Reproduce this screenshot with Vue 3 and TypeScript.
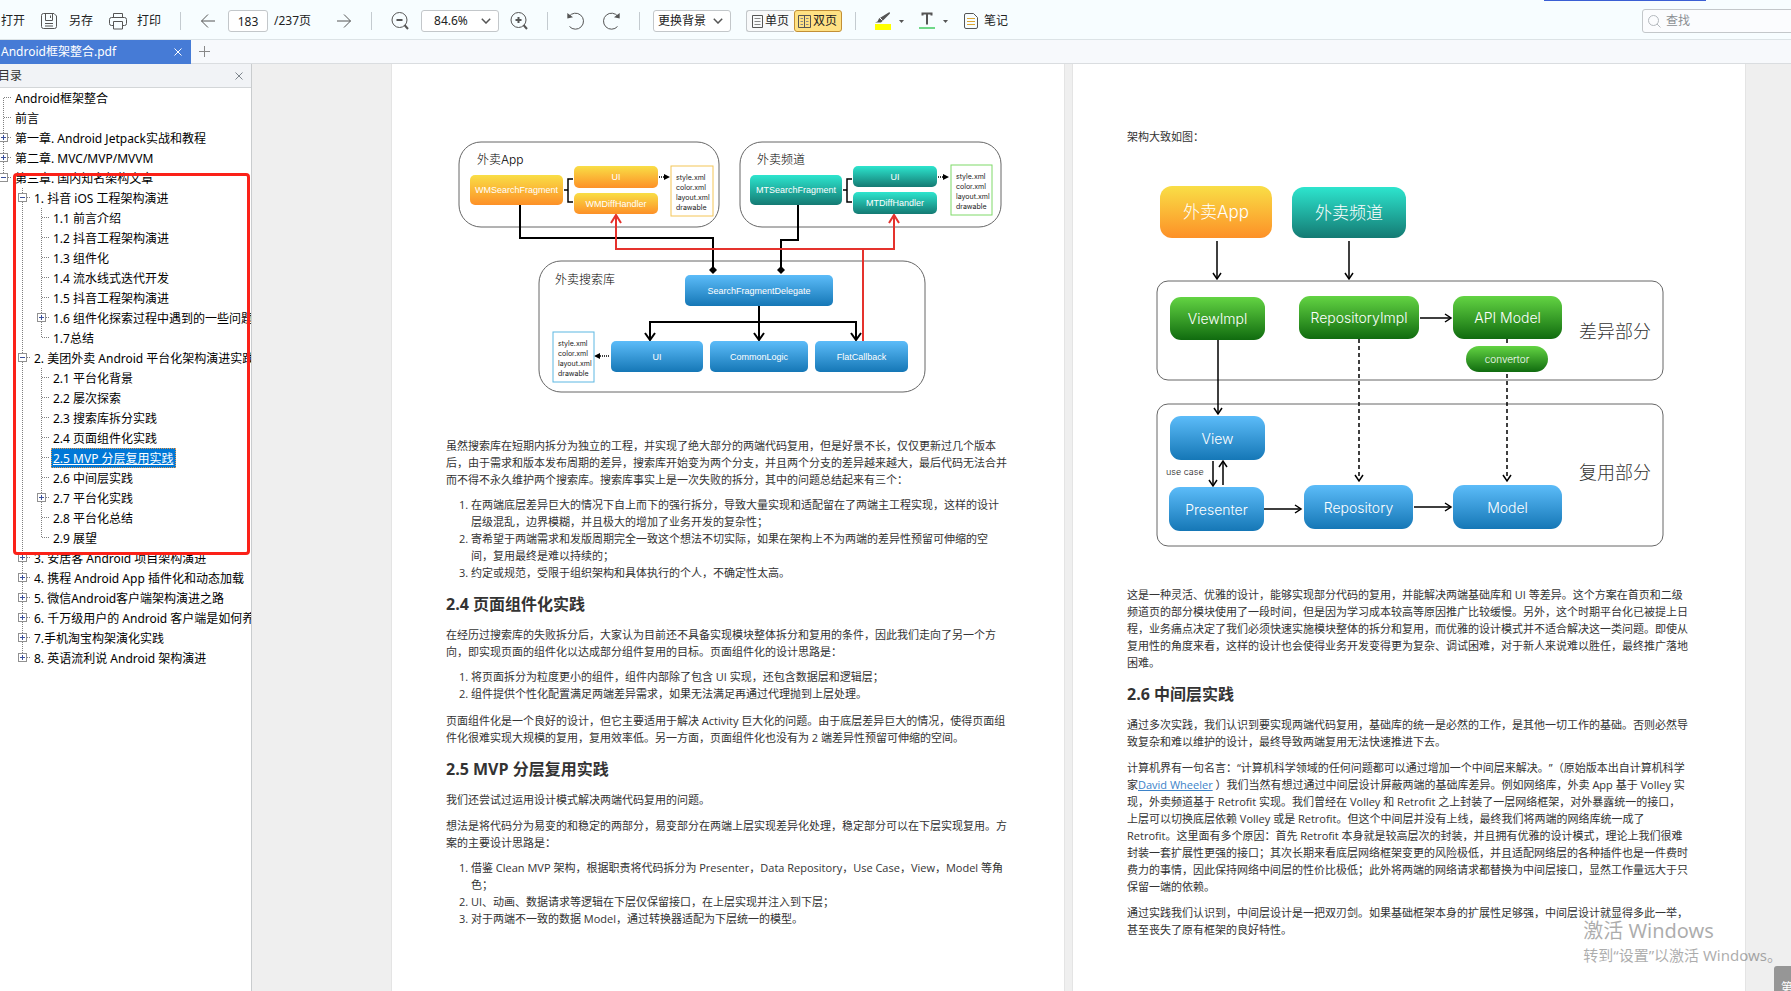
<script setup lang="ts">
import { ref } from 'vue'

type Guide = 'line' | 'first' | 'top'
interface TreeNode {
  text: string
  depth: number
  box?: 'plus' | 'minus'
  guide?: Guide
}
interface Block {
  x: number
  y: number
  w: number
  h: number
  r: number
  fill: string
  text: string
  size: string
}

const pageNumber = ref('183')
const keyword = ref('')
const selected = ref('2.5 MVP 分层复用实践')

const nodes: TreeNode[] = [
  { text: 'Android框架整合', depth: 0, guide: 'first' },
  { text: '前言', depth: 0 },
  { text: '第一章. Android Jetpack实战和教程', depth: 0, box: 'plus' },
  { text: '第二章. MVC/MVP/MVVM', depth: 0, box: 'plus' },
  { text: '第三章. 国内知名架构文章', depth: 0, box: 'minus', guide: 'top' },
  { text: '1. 抖音 iOS 工程架构演进', depth: 1, box: 'minus' },
  { text: '1.1 前言介绍', depth: 2 },
  { text: '1.2 抖音工程架构演进', depth: 2 },
  { text: '1.3 组件化', depth: 2 },
  { text: '1.4 流水线式迭代开发', depth: 2 },
  { text: '1.5 抖音工程架构演进', depth: 2 },
  { text: '1.6 组件化探索过程中遇到的一些问题', depth: 2, box: 'plus' },
  { text: '1.7总结', depth: 2, guide: 'top' },
  { text: '2. 美团外卖 Android 平台化架构演进实践', depth: 1, box: 'minus' },
  { text: '2.1 平台化背景', depth: 2 },
  { text: '2.2 屡次探索', depth: 2 },
  { text: '2.3 搜索库拆分实践', depth: 2 },
  { text: '2.4 页面组件化实践', depth: 2 },
  { text: '2.5 MVP 分层复用实践', depth: 2 },
  { text: '2.6 中间层实践', depth: 2 },
  { text: '2.7 平台化实践', depth: 2, box: 'plus' },
  { text: '2.8 平台化总结', depth: 2 },
  { text: '2.9 展望', depth: 2, guide: 'top' },
  { text: '3. 安居客 Android 项目架构演进', depth: 1, box: 'plus' },
  { text: '4. 携程 Android App 插件化和动态加载', depth: 1, box: 'plus' },
  { text: '5. 微信Android客户端架构演进之路', depth: 1, box: 'plus' },
  { text: '6. 千万级用户的 Android 客户端是如何养成的', depth: 1, box: 'plus' },
  { text: '7.手机淘宝构架演化实践', depth: 1, box: 'plus' },
  { text: '8. 英语流利说 Android 架构演进', depth: 1, box: 'plus', guide: 'top' },
]

const guidePath: Record<Guide, string> = {
  line: 'M9.5 0V20',
  first: 'M9.5 10V20',
  top: 'M9.5 0V10',
}

const searchBlocks: Block[] = [
  { x: 470, y: 175, w: 93, h: 30, r: 5, fill: 'orange', text: 'WMSearchFragment', size: 's' },
  { x: 574, y: 166, w: 84, h: 22, r: 5, fill: 'orange', text: 'UI', size: 's' },
  { x: 574, y: 193, w: 84, h: 21, r: 5, fill: 'orange', text: 'WMDiffHandler', size: 's' },
  { x: 750, y: 175, w: 92, h: 30, r: 5, fill: 'teal', text: 'MTSearchFragment', size: 's' },
  { x: 853, y: 166, w: 84, h: 21, r: 5, fill: 'teal', text: 'UI', size: 's' },
  { x: 853, y: 192, w: 84, h: 22, r: 5, fill: 'teal', text: 'MTDiffHandler', size: 's' },
  { x: 685, y: 275, w: 148, h: 31, r: 5, fill: 'blue', text: 'SearchFragmentDelegate', size: 's' },
  { x: 611, y: 341, w: 92, h: 31, r: 5, fill: 'blue', text: 'UI', size: 's' },
  { x: 710, y: 341, w: 98, h: 31, r: 5, fill: 'blue', text: 'CommonLogic', size: 's' },
  { x: 815, y: 341, w: 93, h: 31, r: 5, fill: 'blue', text: 'FlatCallback', size: 's' },
]

const resourceLists = [
  { x: 671, y: 166, w: 42, h: 50, color: '#f4c556' },
  { x: 951, y: 165, w: 41, h: 50, color: '#7fd968' },
  { x: 553, y: 332, w: 41, h: 50, color: '#5db7e2' },
]
const resourceNames = ['style.xml', 'color.xml', 'layout.xml', 'drawable']

const layerBlocks: Block[] = [
  { x: 1160, y: 186, w: 112, h: 52, r: 12, fill: 'orange', text: '外卖App', size: 'l' },
  { x: 1292, y: 187, w: 114, h: 51, r: 12, fill: 'teal', text: '外卖频道', size: 'l' },
  { x: 1170, y: 297, w: 95, h: 43, r: 11, fill: 'green', text: 'ViewImpl', size: 'm' },
  { x: 1299, y: 296, w: 120, h: 43, r: 11, fill: 'green', text: 'RepositoryImpl', size: 'm' },
  { x: 1453, y: 296, w: 109, h: 43, r: 11, fill: 'green', text: 'API Model', size: 'm' },
  { x: 1466, y: 346, w: 82, h: 26, r: 13, fill: 'green', text: 'convertor', size: 'c' },
  { x: 1170, y: 416, w: 95, h: 44, r: 11, fill: 'blue', text: 'View', size: 'm' },
  { x: 1169, y: 487, w: 95, h: 44, r: 11, fill: 'blue', text: 'Presenter', size: 'm' },
  { x: 1304, y: 485, w: 109, h: 44, r: 11, fill: 'blue', text: 'Repository', size: 'm' },
  { x: 1453, y: 485, w: 109, h: 44, r: 11, fill: 'blue', text: 'Model', size: 'm' },
]
</script>

<template>
  <div class="reader">
    <header class="toolbar">
      <button class="tool">打开</button>
      <button class="tool save">
        <svg width="16" height="16" viewBox="0 0 16 16" class="stroke">
          <path d="M2.5 .5H13l2.500 2.500V13.500a2 2 0 0 1-2 2H2.500a2 2 0 0 1-2-2V2.500a2 2 0 0 1 2-2z" />
          <path d="M4.500 .5V7.500H11.500V.5M9.500 2.500V5M4 10.500H12M4 13H12" />
        </svg>
        <span>另存</span>
      </button>
      <button class="tool print">
        <svg width="18" height="17" viewBox="0 0 18 17" class="stroke">
          <path d="M4.500 4.500V.5H13.500V4.500" />
          <path d="M4 12.500H2.500a2 2 0 0 1-2-2V6.500a2 2 0 0 1 2-2H15.500a2 2 0 0 1 2 2V10.500a2 2 0 0 1-2 2H14" />
          <path d="M4.500 8.500H13.500V16H4.500z" />
        </svg>
        <span>打印</span>
      </button>
      <i class="sep"></i>
      <button class="tool" aria-label="上一页">
        <svg width="16" height="16" viewBox="0 0 16 16" class="stroke"><path d="M15 8H1.500M8 1.500L1.500 8 8 14.500" /></svg>
      </button>
      <input id="page-no" v-model="pageNumber" class="page-no" type="text" />
      <label class="page-total" for="page-no">/237页</label>
      <button class="tool next" aria-label="下一页">
        <svg width="16" height="16" viewBox="0 0 16 16" class="stroke"><path d="M1 8H14.500M8 1.500L14.500 8 8 14.500" /></svg>
      </button>
      <i class="sep"></i>
      <button class="tool" aria-label="缩小">
        <svg width="18" height="18" viewBox="0 0 18 18" class="stroke">
          <circle cx="8.500" cy="8" r="7.500" /><path d="M5.500 8H11.500M13.500 13L17 17" class="heavy" />
        </svg>
      </button>
      <span class="picker zoom">
        <select aria-label="缩放比例"><option>84.6%</option><option>100%</option></select>
        <svg width="10" height="6" viewBox="0 0 10 6" class="stroke mid"><path d="M.8 .8L5 5 9.200 .8" /></svg>
      </span>
      <button class="tool zoom-in" aria-label="放大">
        <svg width="18" height="18" viewBox="0 0 18 18" class="stroke">
          <circle cx="8.500" cy="8" r="7.500" /><path d="M5.500 8H11.500M8.500 5V11M13.500 13L17 17" class="heavy" />
        </svg>
      </button>
      <i class="sep"></i>
      <button class="tool" aria-label="撤销">
        <svg width="18" height="18" viewBox="0 0 18 18" class="stroke">
          <path d="M2 4.500A8 8 0 1 1 2.500 14.500" /><path d="M.3 1V6.500L6 5.200z" class="solid" />
        </svg>
      </button>
      <button class="tool redo" aria-label="重做">
        <svg width="18" height="18" viewBox="0 0 18 18" class="stroke">
          <path d="M16 4.500A8 8 0 1 0 15.500 14.500" /><path d="M17.700 1V6.500L12 5.200z" class="solid" />
        </svg>
      </button>
      <i class="sep narrow"></i>
      <span class="picker background">
        <select aria-label="更换背景"><option>更换背景</option></select>
        <svg width="10" height="6" viewBox="0 0 10 6" class="stroke mid"><path d="M.8 .8L5 5 9.200 .8" /></svg>
      </span>
      <div class="views">
        <button>
          <svg width="11" height="13" viewBox="0 0 11 13" class="stroke"><path d="M.5 .5H10.500V12.500H.5z" /><path d="M2.500 3.500H8.500M2.500 6.500H8.500M2.500 9.500H8.500" class="thin" /></svg>
          <span>单页</span>
        </button>
        <button class="active">
          <svg width="13" height="13" viewBox="0 0 13 13" class="stroke"><path d="M.5 .5H12.500V12.500H.5zM6.500 .5V12.500" /><path d="M2.500 3.500H5M2.500 6.500H5M2.500 9.500H5M8 3.500H10.500M8 6.500H10.500M8 9.500H10.500" class="thin" /></svg>
          <span>双页</span>
        </button>
      </div>
      <i class="sep edge"></i>
      <button class="tool marker" aria-label="高亮">
        <svg width="16" height="18" viewBox="0 0 16 18">
          <path d="M14.500 0L4 6.500 2.500 9.500 0 10.500H6L15 1.500z" fill="#555" /><path d="M5 6L7.500 8.500" stroke="#fff" />
          <path d="M0 12H16V18H0z" fill="#ff0" />
        </svg>
        <svg width="5" height="3" viewBox="0 0 5 3"><path d="M0 0H5L2.500 3z" fill="#555" /></svg>
      </button>
      <button class="tool marker underline" aria-label="下划线">
        <svg width="16" height="18" viewBox="0 0 16 18">
          <path d="M3.500 3.500V1.500H12.500V3.500M8 1.500V12.500" fill="none" stroke="#555" stroke-width="2" />
          <path d="M0 15H16V17H0z" fill="#6fd888" />
        </svg>
        <svg width="5" height="3" viewBox="0 0 5 3"><path d="M0 0H5L2.500 3z" fill="#555" /></svg>
      </button>
      <button class="tool notes">
        <svg width="14" height="16" viewBox="0 0 14 16" class="stroke">
          <path d="M2 .5H9.500L13.500 4.500V14a1.500 1.500 0 0 1-1.500 1.500H2A1.500 1.500 0 0 1 .5 14V2A1.500 1.500 0 0 1 2 .5z" />
          <path d="M3 5.500H11M3 8.500H11M3 11.500H11" class="gold" />
        </svg>
        <span>笔记</span>
      </button>
      <label class="search">
        <svg width="13" height="13" viewBox="0 0 13 13"><path d="M9 9l3.500 3.500M5.500 10.500a5 5 0 1 1 0-10 5 5 0 0 1 0 10z" fill="none" stroke="#b3b8bd" /></svg>
        <input v-model="keyword" type="text" placeholder="查找" aria-label="查找" />
      </label>
      <div class="strip"></div>
    </header>

    <nav class="tabs">
      <div class="tab">
        <a href="#doc">Android框架整合.pdf</a>
        <button aria-label="关闭标签"><svg width="8" height="8" viewBox="0 0 8 8"><path d="M.5 .5l7 7M7.500 .5l-7 7" stroke="#fff" /></svg></button>
      </div>
      <button class="add" aria-label="新建标签"><svg width="11" height="11" viewBox="0 0 11 11"><path d="M5.500 0V11M0 5.500H11" stroke="#888" /></svg></button>
    </nav>

    <div class="body">
      <aside class="outline">
        <div class="outline-head">
          <span>目录</span>
          <button aria-label="关闭目录"><svg width="8" height="8" viewBox="0 0 8 8"><path d="M.5 .5l7 7M7.500 .5l-7 7" stroke="#7d858c" /></svg></button>
        </div>
        <ul class="tree">
          <li v-for="node in nodes" :key="node.text">
            <template v-for="level in node.depth + 1" :key="level">
              <svg class="guide" width="19" height="20" viewBox="0 0 19 20">
                <path v-if="level - 1 === node.depth" :d="guidePath[node.guide ?? 'line'] + 'M10 9.500H18'" class="dots" />
                <path v-else-if="level === 2" :d="guidePath.line" class="dots" />
                <g v-if="level - 1 === node.depth && node.box">
                  <rect x="5.500" y="5.500" width="8" height="8" fill="#fff" stroke="#919191" />
                  <path :d="node.box === 'plus' ? 'M7 9.500H12M9.500 7V12' : 'M7 9.500H12'" stroke="#3a4f9a" />
                </g>
              </svg>
            </template>
            <a href="#doc" :class="{ current: node.text === selected }" @click.prevent="selected = node.text">{{ node.text }}</a>
          </li>
        </ul>
        <div class="frame"></div>
      </aside>

      <main id="doc" class="pages">
        <article class="page">
          <svg class="figure" viewBox="446 128 564 300">
            <defs>
              <linearGradient id="orange" x2="0" y2="1"><stop stop-color="#f9de46" /><stop offset="1" stop-color="#fd9027" /></linearGradient>
              <linearGradient id="teal" x2="0" y2="1"><stop stop-color="#2de5ce" /><stop offset="1" stop-color="#147a73" /></linearGradient>
              <linearGradient id="blue" x2="0" y2="1"><stop stop-color="#5cbcf9" /><stop offset="1" stop-color="#1577b6" /></linearGradient>
              <linearGradient id="green" x2="0" y2="1"><stop stop-color="#63d443" /><stop offset="1" stop-color="#106b0f" /></linearGradient>
            </defs>
            <g class="group">
              <rect x="459" y="142" width="260" height="85" rx="22" />
              <rect x="740" y="142" width="261" height="85" rx="22" />
              <rect x="539" y="261" width="386" height="131" rx="22" />
            </g>
            <g class="caption">
              <text x="477" y="164">外卖App</text>
              <text x="757" y="164">外卖频道</text>
              <text x="555" y="284">外卖搜索库</text>
            </g>
            <path class="wire bold" d="M520 205V238H713V268M798 205V240H781V268M759 306V339M650 339V322H856V339" />
            <path class="wire bold" d="M645 333l5 7 5-7M754 333l5 7 5-7M851 333l5 7 5-7" />
            <path d="M713 266l4 4-4 4-4-4zM781 266l4 4-4 4-4-4z" />
            <path class="wire" d="M564 190H568M573 179H568V202H573M843 190H847M852 179H847V202H852" />
            <path class="wire dotted" d="M659 177H666M938 177H945M609 356H598" />
            <path d="M664 174l6 3-6 3zM943 174l6 3-6 3zM600 353l-6 3 6 3z" />
            <path class="wire red" d="M616 217V249H894V217M863 249V341M611 223l5-8 5 8M889 223l5-8 5 8" />
            <g v-for="block in searchBlocks" :key="block.x + '-' + block.y">
              <rect :x="block.x" :y="block.y" :width="block.w" :height="block.h" :rx="block.r" :fill="`url(#${block.fill})`" />
              <text class="block" :class="block.size" :x="block.x + block.w / 2" :y="block.y + block.h / 2">{{ block.text }}</text>
            </g>
            <g v-for="list in resourceLists" :key="list.x">
              <rect :x="list.x" :y="list.y" :width="list.w" :height="list.h" fill="#fff" :stroke="list.color" />
              <text v-for="(name, i) in resourceNames" :key="name" class="resource" :x="list.x + 5" :y="list.y + 14 + i * 10">{{ name }}</text>
            </g>
          </svg>
          <p>虽然搜索库在短期内拆分为独立的工程，并实现了绝大部分的两端代码复用，但是好景不长，仅仅更新过几个版本后，由于需求和版本发布周期的差异，搜索库开始变为两个分支，并且两个分支的差异越来越大，最后代码无法合并而不得不永久维护两个搜索库。搜索库事实上是一次失败的拆分，其中的问题总结起来有三个：</p>
          <ol>
            <li>在两端底层差异巨大的情况下自上而下的强行拆分，导致大量实现和适配留在了两端主工程实现，这样的设计层级混乱，边界模糊，并且极大的增加了业务开发的复杂性；</li>
            <li>寄希望于两端需求和发版周期完全一致这个想法不切实际，如果在架构上不为两端的差异性预留可伸缩的空间，复用最终是难以持续的；</li>
            <li>约定或规范，受限于组织架构和具体执行的个人，不确定性太高。</li>
          </ol>
          <h2>2.4 页面组件化实践</h2>
          <p>在经历过搜索库的失败拆分后，大家认为目前还不具备实现模块整体拆分和复用的条件，因此我们走向了另一个方向，即实现页面的组件化以达成部分组件复用的目标。页面组件化的设计思路是：</p>
          <ol>
            <li>将页面拆分为粒度更小的组件，组件内部除了包含 UI 实现，还包含数据层和逻辑层；</li>
            <li>组件提供个性化配置满足两端差异需求，如果无法满足再通过代理抛到上层处理。</li>
          </ol>
          <p>页面组件化是一个良好的设计，但它主要适用于解决 Activity 巨大化的问题。由于底层差异巨大的情况，使得页面组件化很难实现大规模的复用，复用效率低。另一方面，页面组件化也没有为 2 端差异性预留可伸缩的空间。</p>
          <h2>2.5 MVP 分层复用实践</h2>
          <p>我们还尝试过运用设计模式解决两端代码复用的问题。</p>
          <p>想法是将代码分为易变的和稳定的两部分，易变部分在两端上层实现差异化处理，稳定部分可以在下层实现复用。方案的主要设计思路是：</p>
          <ol>
            <li>借鉴 Clean MVP 架构，根据职责将代码拆分为 Presenter，Data Repository，Use Case，View，Model 等角色；</li>
            <li>UI、动画、数据请求等逻辑在下层仅保留接口，在上层实现并注入到下层；</li>
            <li>对于两端不一致的数据 Model，通过转换器适配为下层统一的模型。</li>
          </ol>
        </article>

        <article class="page">
          <p>架构大致如图：</p>
          <svg class="figure" viewBox="1127 154 564 423">
            <g class="group">
              <rect x="1157" y="281" width="506" height="99" rx="11" />
              <rect x="1157" y="404" width="506" height="142" rx="11" />
            </g>
            <path class="wire" d="M1217 241V279M1349 241V279M1218 340V414M1420 318H1451M1213 461V486M1223 485V461M1264 509H1301M1414 507H1451" />
            <path class="wire" d="M1213 273l4 6 4-6M1345 273l4 6 4-6M1214 408l4 6 4-6M1445 314l6 4-6 4M1209 480l4 6 4-6M1219 467l4-6 4 6M1295 505l6 4-6 4M1445 503l6 4-6 4M1355 475l4 6 4-6M1503 475l4 6 4-6" />
            <path class="wire dashed" d="M1359 339V479M1507 339V479" />
            <g v-for="block in layerBlocks" :key="block.text">
              <rect :x="block.x" :y="block.y" :width="block.w" :height="block.h" :rx="block.r" :fill="`url(#${block.fill})`" />
              <text class="block" :class="block.size" :x="block.x + block.w / 2" :y="block.y + block.h / 2">{{ block.text }}</text>
            </g>
            <text class="layer" x="1579" y="338">差异部分</text>
            <text class="layer" x="1579" y="479">复用部分</text>
            <text class="use-case" x="1166" y="475">use case</text>
          </svg>
          <p>这是一种灵活、优雅的设计，能够实现部分代码的复用，并能解决两端基础库和 UI 等差异。这个方案在首页和二级频道页的部分模块使用了一段时间，但是因为学习成本较高等原因推广比较缓慢。另外，这个时期平台化已被提上日程，业务痛点决定了我们必须快速实施模块整体的拆分和复用，而优雅的设计模式并不适合解决这一类问题。即使从复用性的角度来看，这样的设计也会使得业务开发变得更为复杂、调试困难，对于新人来说难以胜任，最终推广落地困难。</p>
          <h2>2.6 中间层实践</h2>
          <p>通过多次实践，我们认识到要实现两端代码复用，基础库的统一是必然的工作，是其他一切工作的基础。否则必然导致复杂和难以维护的设计，最终导致两端复用无法快速推进下去。</p>
          <p>计算机界有一句名言：“计算机科学领域的任何问题都可以通过增加一个中间层来解决。”（原始版本出自计算机科学家<a href="#doc">David Wheeler</a> ）我们当然有想过通过中间层设计屏蔽两端的基础库差异。例如网络库，外卖 App 基于 Volley 实现，外卖频道基于 Retrofit 实现。我们曾经在 Volley 和 Retrofit 之上封装了一层网络框架，对外暴露统一的接口，上层可以切换底层依赖 Volley 或是 Retrofit。但这个中间层并没有上线，最终我们将两端的网络库统一成了 Retrofit。这里面有多个原因：首先 Retrofit 本身就是较高层次的封装，并且拥有优雅的设计模式，理论上我们很难封装一套扩展性更强的接口；其次长期来看底层网络框架变更的风险极低，并且适配网络层的各种插件也是一件费时费力的事情，因此保持网络中间层的性价比极低；此外将两端的网络请求都替换为中间层接口，显然工作量远大于只保留一端的依赖。</p>
          <p>通过实践我们认识到，中间层设计是一把双刃剑。如果基础框架本身的扩展性足够强，中间层设计就显得多此一举，甚至丧失了原有框架的良好特性。</p>
        </article>
      </main>
    </div>

    <div class="watermark">
      <strong>激活 Windows</strong>
      <span>转到“设置”以激活 Windows。</span>
    </div>
    <div class="corner">第</div>
  </div>
</template>

<style>
html,
body {
  margin: 0;
  overflow: hidden;
}
</style>

<style scoped>
.reader {
  position: relative;
  display: flex;
  flex-direction: column;
  height: 100vh;
  overflow: hidden;
  background: #efefef;
  color: #222;
  font: 12px/20px "Noto Sans", "Noto Sans CJK SC", sans-serif;
}
button,
input,
select {
  margin: 0;
  padding: 0;
  border: 0;
  background: none;
  color: inherit;
  font: inherit;
}
button {
  display: flex;
  align-items: center;
}
svg {
  display: block;
  flex: none;
}
a {
  color: inherit;
  text-decoration: none;
}
.toolbar {
  position: relative;
  display: flex;
  flex: none;
  align-items: center;
  height: 36px;
  padding: 3px 0 0 1px;
  border-bottom: 1px solid #dce3e6;
  background: #f7fdff;
  white-space: nowrap;
}
.stroke {
  fill: none;
  stroke: #555;
}
.heavy {
  stroke-width: 2;
}
.mid {
  stroke-width: 1.5;
}
.thin {
  stroke: #888;
}
.gold {
  stroke: #dda633;
}
.solid {
  fill: #555;
  stroke: none;
}
.save {
  gap: 12px;
  margin-left: 16px;
}
.print {
  gap: 10px;
  margin-left: 16px;
}
.sep {
  flex: none;
  width: 1px;
  height: 18px;
  margin: 0 19px;
  background: #c4cbd0;
}
.sep.narrow {
  margin-right: 13px;
}
.sep.edge {
  margin-left: 13px;
}
.page-no {
  box-sizing: border-box;
  width: 40px;
  height: 22px;
  margin-left: 12px;
  border: 1px solid #c3c7ca;
  border-radius: 3px;
  background: #fff;
  text-align: center;
}
.page-total {
  width: 38px;
  margin-left: 6px;
}
.next {
  margin-left: 24px;
}
.picker {
  display: grid;
  align-items: center;
  box-sizing: border-box;
  width: 78px;
  height: 22px;
  border: 1px solid #c3c7ca;
  border-radius: 3px;
  background: #fff;
}
.picker select,
.picker svg {
  grid-area: 1 / 1;
}
.picker select {
  height: 20px;
  padding-left: 4px;
  appearance: none;
}
.picker svg {
  justify-self: end;
  margin-right: 7px;
  pointer-events: none;
}
.zoom {
  margin-left: 12px;
}
.zoom select {
  padding-left: 12px;
}
.zoom-in {
  margin-left: 11px;
}
.redo {
  margin-left: 17px;
}
.views {
  display: flex;
  margin-left: 15px;
}
.views button {
  box-sizing: border-box;
  gap: 2px;
  width: 48px;
  height: 22px;
  padding-left: 5px;
  border: 1px solid #c3c7ca;
  border-right: 0;
  border-radius: 3px 0 0 3px;
  background: #f8f9fa;
}
.views .active {
  padding-left: 3px;
  border: 1px solid #c28f36;
  border-radius: 3px;
  background: #ffe183;
}
.marker {
  gap: 8px;
}
.underline {
  margin-left: 15px;
}
.notes {
  gap: 6px;
  margin-left: 16px;
}
.search {
  display: flex;
  align-items: center;
  gap: 5px;
  box-sizing: border-box;
  width: 153px;
  height: 24px;
  margin: 0 -4px 0 auto;
  padding-left: 5px;
  border: 1px solid #c3c7ca;
  border-radius: 3px;
  background: #fbfcfe;
}
.search input {
  width: 100px;
}
.search input::placeholder {
  color: #8b8f93;
  opacity: 1;
}
.strip {
  position: absolute;
  top: 0;
  right: 85px;
  width: 162px;
  height: 1px;
  background: #3b5fd4;
}
.tabs {
  display: flex;
  flex: none;
  height: 23px;
  border-bottom: 1px solid #dadde0;
  background: #f7f9fc;
}
.tab {
  display: flex;
  align-items: center;
  justify-content: space-between;
  box-sizing: border-box;
  width: 191px;
  height: 24px;
  padding: 0 9px 0 1px;
  background: #467bd6;
  color: #fff;
}
.add {
  margin-left: 8px;
}
.body {
  display: flex;
  flex: 1;
  min-height: 0;
}
.outline {
  position: relative;
  flex: none;
  width: 251px;
  border-right: 1px solid #c9ccce;
  background: #fff;
  color: #000;
  overflow: hidden;
}
.outline-head {
  display: flex;
  align-items: center;
  justify-content: space-between;
  height: 23px;
  padding-right: 8px;
  border-bottom: 1px solid #d3d6d8;
  background: #f1f3f6;
  color: #333;
}
.outline-head span {
  margin-left: -2px;
}
.tree {
  margin: 0 0 0 -6px;
  padding: 0;
  list-style: none;
}
.tree li {
  display: flex;
  height: 20px;
  white-space: nowrap;
}
.tree a {
  box-sizing: border-box;
  height: 20px;
  padding: 0 2px;
  line-height: 22px;
}
.tree .current {
  border: 1px dotted #e89a4c;
  padding: 0 1px;
  background: #0078d7;
  color: #fff;
  line-height: 20px;
  text-decoration: underline;
}
.guide {
  shape-rendering: crispEdges;
}
.dots {
  fill: none;
  stroke: #808080;
  stroke-dasharray: 1 1;
}
.frame {
  position: absolute;
  top: 109px;
  left: 13px;
  right: 1px;
  height: 376px;
  border: 3px solid #fb2118;
  border-radius: 4px;
  pointer-events: none;
}
.pages {
  display: flex;
  flex: 1;
  gap: 9px;
  min-width: 0;
  padding: 0 46px 0 140px;
  overflow: hidden;
}
.page {
  flex: 1;
  min-width: 0;
  box-sizing: border-box;
  padding: 64px 54px 0;
  background: #fff;
  box-shadow: 0 0 0 1px #e4e4e4;
  color: #333;
  font-family: "Open Sans", "Noto Sans CJK SC", sans-serif;
  font-size: 11px;
  line-height: 17px;
  text-spacing-trim: space-all;
}
.page p {
  margin: 9px 0 0;
  padding-right: 1px;
}
.page ol {
  margin: 8px 0 0;
  padding: 0 4px 0 25px;
}
.page ol + p {
  margin-top: 10px;
}
.page > :first-child {
  margin-top: 0;
}
.page h2 {
  margin: 11px 0 0;
  font-size: 16px;
  line-height: 24px;
  font-weight: 700;
}
.page h2 + p {
  margin-top: 10px;
}
.page p a {
  color: #3d83c9;
  text-decoration: underline;
}
.figure {
  width: 100%;
  height: auto;
  font-family: Inter, "Noto Sans CJK SC", sans-serif;
}
.page p + .figure {
  margin-top: 9px;
}
.group {
  fill: none;
  stroke: #666;
}
.caption {
  font-size: 12px;
  font-weight: 300;
}
.wire {
  fill: none;
  stroke: #000;
  stroke-width: 1.5;
}
.wire.bold {
  stroke-width: 2;
}
.wire.red {
  stroke: #e5322d;
  stroke-width: 2;
}
.wire.dotted {
  stroke-dasharray: 1 1;
}
.wire.dashed {
  stroke-dasharray: 4 3;
}
.block {
  fill: #fff;
  font-weight: 300;
  text-anchor: middle;
  dominant-baseline: central;
}
.s {
  font-family: "Liberation Sans", Arial, sans-serif;
  font-size: 9px;
}
.c {
  font-size: 10px;
}
.m {
  font-size: 14px;
}
.l {
  font-size: 17px;
}
.resource {
  fill: #222;
  font-size: 7px;
}
.layer {
  fill: #333;
  font-size: 18px;
  font-weight: 300;
}
.use-case {
  fill: #222;
  font-size: 9px;
  font-weight: 300;
}
.watermark {
  position: absolute;
  right: 9px;
  bottom: 25px;
  display: flex;
  flex-direction: column;
  color: #000;
  font-size: 15px;
  line-height: 22px;
  opacity: 0.32;
  pointer-events: none;
}
.watermark strong {
  font-size: 20px;
  line-height: 26px;
  font-weight: 400;
}
.corner {
  position: absolute;
  right: 0;
  bottom: 0;
  box-sizing: border-box;
  width: 17px;
  height: 25px;
  padding: 12px 0 0 7px;
  border-radius: 3px 0 0;
  background: #969696;
  color: #fff;
  overflow: hidden;
}
</style>
